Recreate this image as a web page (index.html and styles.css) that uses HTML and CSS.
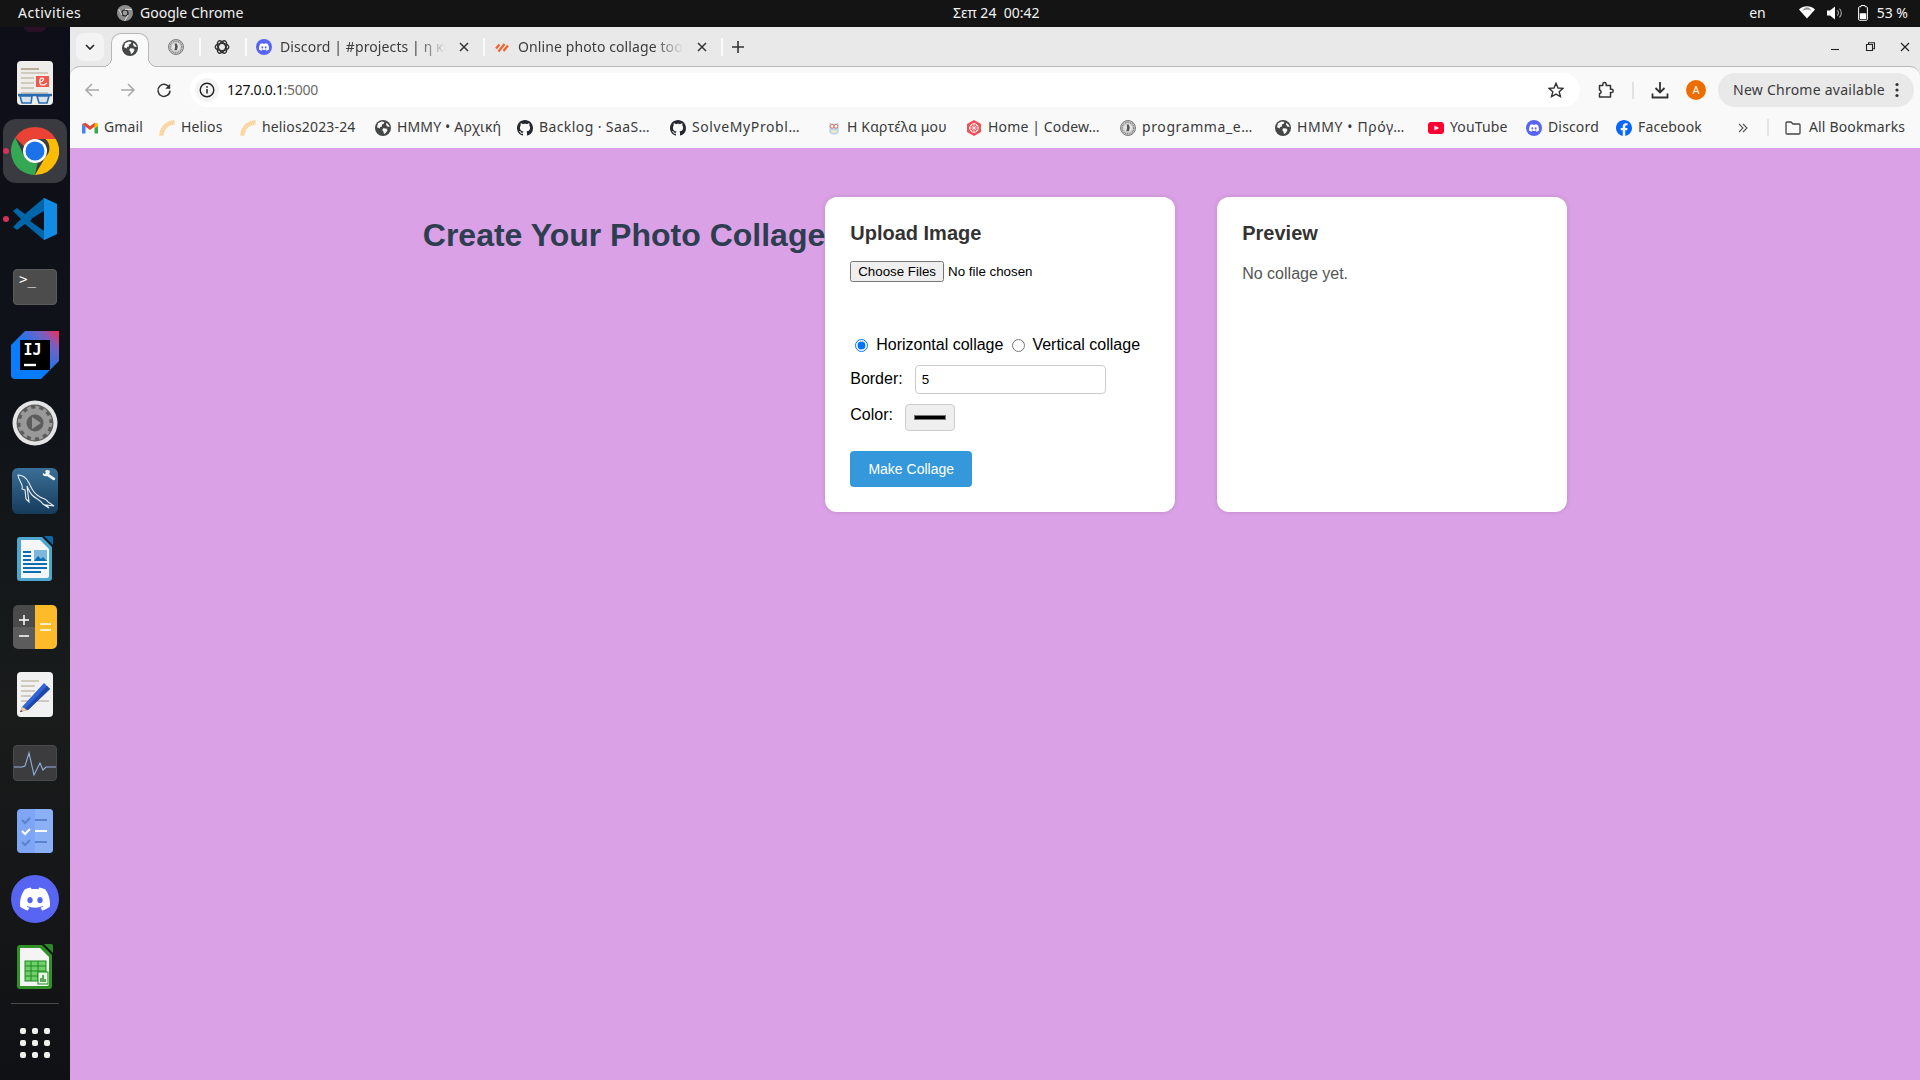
FILE: index.html
```html
<!DOCTYPE html>
<html lang="en">
<head>
<meta charset="utf-8">
<title>Online photo collage tool</title>
<link rel="stylesheet" href="styles.css">
</head>
<body>
<svg class="defs" width="0" height="0" aria-hidden="true">
  <symbol id="i-globe" viewBox="0 0 16 16">
    <circle cx="8" cy="8" r="8" fill="#444746"/>
    <path d="M3 3.2 6.6 1.400 9.400 2 8.600 4 6.800 4.600 7 6.400 5 7 4.800 8.400 2 7.200Z M8.200 8.200 11.400 8.400 12.600 10 10.800 13 9 14 8.400 11.400 7.200 10Z M11.400 2.800 14 5.200 14.600 7 12.200 6.400 11 4.600Z" fill="#f9f9f9"/>
  </symbol>
  <symbol id="i-github" viewBox="0 0 16 16">
    <path fill="#24292f" d="M8 0C3.58 0 0 3.58 0 8c0 3.54 2.29 6.53 5.47 7.59.4.07.55-.17.55-.38 0-.19-.01-.82-.01-1.49-2.01.37-2.53-.49-2.69-.94-.09-.23-.48-.94-.82-1.13-.28-.15-.68-.52-.01-.53.63-.01 1.08.58 1.23.82.72 1.21 1.87.87 2.33.66.07-.52.28-.87.51-1.07-1.78-.2-3.64-.89-3.64-3.95 0-.87.31-1.59.82-2.15-.08-.2-.36-1.02.08-2.12 0 0 .67-.21 2.2.82.64-.18 1.32-.27 2-.27.68 0 1.36.09 2 .27 1.53-1.04 2.2-.82 2.2-.82.44 1.1.16 1.92.08 2.12.51.56.82 1.27.82 2.15 0 3.07-1.87 3.75-3.65 3.95.29.25.54.73.54 1.48 0 1.07-.01 1.93-.01 2.2 0 .21.15.46.55.38A8.013 8.013 0 0016 8c0-4.42-3.58-8-8-8z"/>
  </symbol>
  <symbol id="i-discord-mark" viewBox="0 0 24 24">
    <path fill="#fff" d="M20.317 4.3698a19.7913 19.7913 0 00-4.8851-1.5152.0741.0741 0 00-.0785.0371c-.211.3753-.4447.8648-.6083 1.2495-1.8447-.2762-3.68-.2762-5.4868 0-.1636-.3933-.4058-.8742-.6177-1.2495a.077.077 0 00-.0785-.037 19.7363 19.7363 0 00-4.8852 1.515.0699.0699 0 00-.0321.0277C.5334 9.0458-.319 13.5799.0992 18.0578a.0824.0824 0 00.0312.0561c2.0528 1.5076 4.0413 2.4228 5.9929 3.0294a.0777.0777 0 00.0842-.0276c.4616-.6304.8731-1.2952 1.226-1.9942a.076.076 0 00-.0416-.1057c-.6528-.2476-1.2743-.5495-1.8722-.8923a.077.077 0 01-.0076-.1277c.1258-.0943.2517-.1923.3718-.2914a.0743.0743 0 01.0776-.0105c3.9278 1.7933 8.18 1.7933 12.0614 0a.0739.0739 0 01.0785.0095c.1202.099.246.1981.3728.2924a.077.077 0 01-.0066.1276 12.2986 12.2986 0 01-1.873.8914.0766.0766 0 00-.0407.1067c.3604.698.7719 1.3628 1.225 1.9932a.076.076 0 00.0842.0286c1.961-.6067 3.9495-1.5219 6.0023-3.0294a.077.077 0 00.0313-.0552c.5004-5.177-.8382-9.6739-3.5485-13.6604a.061.061 0 00-.0312-.0286zM8.02 15.3312c-1.1825 0-2.1569-1.0857-2.1569-2.419 0-1.3332.9555-2.4189 2.157-2.4189 1.2108 0 2.1757 1.0952 2.1568 2.419 0 1.3332-.9555 2.4189-2.1569 2.4189zm7.9748 0c-1.1825 0-2.1569-1.0857-2.1569-2.419 0-1.3332.9554-2.4189 2.1569-2.4189 1.2108 0 2.1757 1.0952 2.1568 2.419 0 1.3332-.946 2.4189-2.1568 2.4189Z"/>
  </symbol>
  <symbol id="i-discord" viewBox="0 0 16 16">
    <circle cx="8" cy="8" r="8" fill="#5865f2"/>
    <use href="#i-discord-mark" x="3" y="3" width="10" height="10"/>
  </symbol>
  <symbol id="i-helios" viewBox="0 0 16 16">
    <path d="M2.500 15.500A13 13 0 0 1 15.500 2.500" fill="none" stroke="#f9cf8f" stroke-width="4.500" stroke-dasharray="1.500 .4"/>
  </symbol>
  <symbol id="i-seal" viewBox="0 0 16 16">
    <circle cx="8" cy="8" r="7.500" fill="#cfcfcf" stroke="#6f6f6f" stroke-width=".9"/>
    <circle cx="8" cy="8" r="5.800" fill="none" stroke="#777" stroke-width="1.200" stroke-dasharray="1 .8"/>
    <circle cx="8" cy="8" r="3.900" fill="#e6e6e6"/>
    <path d="M6.600 4.600h2.200l1 2.800-.8 3.800H6.300l.8-3.400Z" fill="#555"/>
  </symbol>
  <symbol id="i-x" viewBox="0 0 12 12">
    <path d="M2 2l8 8M10 2l-8 8" stroke="#333" stroke-width="1.500" fill="none"/>
  </symbol>
</svg>

<div class="screen">
  <header class="topbar">
    <span class="tb-activities">Activities</span>
    <span class="tb-app">
      <svg class="tb-app-icon" width="16" height="16" viewBox="0 0 16 16"><circle cx="8" cy="8" r="8" fill="#8d8d8d"/><circle cx="8" cy="8" r="3.600" fill="#222"/><circle cx="8" cy="8" r="2.400" fill="#9a9a9a"/><path d="M8 4.400h7M5 10l-3.400-6M11 10l-3.400 6" stroke="#dcdcdc" stroke-width="1"/></svg>
      Google Chrome
    </span>
    <span class="tb-clock">Σεπ 24&nbsp;&nbsp;00:42</span>
    <span class="tb-status">
      <span class="tb-lang">en</span>
      <svg class="tb-wifi" width="16" height="13" viewBox="0 0 16 13"><path d="M0 3.400C4.400-.8 11.600-.8 16 3.400L8 12.600Z" fill="#fff"/><path d="M3.200 5.200C6-.2 10 0 12.800 5.200 10.400 3.400 5.600 3.400 3.200 5.200Z" fill="#141414" opacity=".45"/></svg>
      <svg class="tb-vol" width="16" height="14" viewBox="0 0 16 14"><path d="M0 4.600h3L8 .6v12.800L3 9.400H0Z" fill="#fff"/><path d="M10.200 4.400a3.400 3.400 0 0 1 0 5.200M12.400 2.600a6 6 0 0 1 0 8.800" fill="none" stroke="#aaa" stroke-width="1.100"/></svg>
      <svg class="tb-batt" width="10" height="16" viewBox="0 0 10 16"><path d="M3 .5h4v1.200h1.400c.6 0 1 .4 1 1v11.600c0 .6-.4 1-1 1H1.600c-.6 0-1-.4-1-1V2.700c0-.6.4-1 1-1H3Z" fill="none" stroke="#fff" stroke-width="1"/><rect x="1.800" y="8.200" width="6.400" height="5.800" rx=".6" fill="#fff"/></svg>
      <span class="tb-pct">53 %</span>
    </span>
  </header>

  <div class="desktop">
    <nav class="dock">
      <span class="dock-peek"></span>
      <div class="dock-slot">
        <svg width="36" height="46" viewBox="0 0 36 46"><rect width="36" height="44" y="1" rx="4" fill="#efedea"/><rect x="4" y="8" width="18" height="2" fill="#b9ae9a"/><path d="M4 13h27M4 18h13M4 23h13M4 28h13M4 33h27" stroke="#cfcabd" stroke-width="2"/><rect x="19" y="16" width="13" height="11" fill="#f0574a"/><path d="M23 22c3 0 5-4 2-4s-3 7 0 7 3-1 5-2" stroke="#fff" stroke-width="1.200" fill="none"/><path d="M1 35h34" stroke="#2a6cb3" stroke-width="2.500"/><path d="M3 36h12l-1 7H5ZM20 36h12l-2 7h-8Z" fill="#d7e4ee" stroke="#2a6cb3" stroke-width="1.600"/></svg>
      </div>
      <div class="dock-slot dock-active">
        <span class="dock-dot"></span>
        <svg width="48" height="48" viewBox="0 0 48 48">
          <path d="M24 0a24 24 0 0 1 20.800 12H24a12 12 0 0 0-11 7.200L4.200 10.400A24 24 0 0 1 24 0Z" fill="#ea4335"/>
          <path d="M44.800 12A24 24 0 0 1 24 48l10.400-18A12 12 0 0 0 34.400 12Z" fill="#fbbc04"/>
          <path d="M24 48A24 24 0 0 1 4.200 10.400L13.600 30a12 12 0 0 0 13 5.700Z" fill="#34a853"/>
          <circle cx="24" cy="24" r="12" fill="#fff"/><circle cx="24" cy="24" r="9.500" fill="#1a73e8"/>
        </svg>
      </div>
      <div class="dock-slot">
        <span class="dock-dot"></span>
        <svg width="44" height="44" viewBox="0 0 44 44">
          <path d="M31 1 44 7v30l-13 6Z" fill="#1f9cf0"/>
          <path d="M31 1v13L17 24 31 34v9L12 27 4 33 0 30l8-8L0 14l4-3 8 6Z" fill="#0065a9"/>
          <path d="M31 14v16L18 22Z" fill="#0f0f17"/>
          <path d="M31 1 44 7v30l-13 6Z" fill="#0078d4" opacity=".45"/>
        </svg>
      </div>
      <div class="dock-slot">
        <div class="dk-term"><span class="dk-term-p">&gt;_</span></div>
      </div>
      <div class="dock-slot">
        <svg width="48" height="48" viewBox="0 0 48 48">
          <defs><linearGradient id="ij" x1="0" y1="1" x2="1" y2="0"><stop offset=".45" stop-color="#087cfa"/><stop offset=".8" stop-color="#7a5fc0"/><stop offset="1" stop-color="#fe2857"/></linearGradient></defs>
          <path d="M14 0h34v30L30 48H4a4 4 0 0 1-4-4V14Z" fill="url(#ij)"/>
          <rect x="9" y="9" width="30" height="30" fill="#000"/>
          <path d="M13 34h12" stroke="#fff" stroke-width="2.400"/>
          <text class="dk-ij" x="12.500" y="24">IJ</text>
        </svg>
      </div>
      <div class="dock-slot">
        <svg width="46" height="46" viewBox="0 0 46 46">
          <circle cx="23" cy="23" r="22.500" fill="#e4e4e4"/><circle cx="23" cy="23" r="18.500" fill="#5c5c5c"/>
          <circle cx="23" cy="23" r="11.500" fill="none" stroke="#999" stroke-width="6"/>
          <circle cx="23" cy="23" r="15.500" fill="none" stroke="#999" stroke-width="3.500" stroke-dasharray="4 4.100"/>
          <path d="M20 17v12l9-6Z" fill="#999"/>
        </svg>
      </div>
      <div class="dock-slot">
        <svg width="46" height="46" viewBox="0 0 46 46">
          <defs><linearGradient id="wb" x1="0" y1="0" x2="0" y2="1"><stop offset="0" stop-color="#3b6f97"/><stop offset="1" stop-color="#163b5c"/></linearGradient></defs>
          <rect width="46" height="46" rx="6" fill="url(#wb)"/>
          <path d="M6 7c5 0 8 2 11 8s5 11 11 14 7 2 8 5l6 4-8-1 3 3-6-4c-2-4-7-5-11-9-3-3-4-7-5-9l2 16-3-3-1-9-3-1c2-4-4-9-4-14Z" fill="none" stroke="#e8eef3" stroke-width="1.100"/>
          <path d="M33 3c2-2 5-1 5 1l-1 2 6 4c1 1-1 3-2 2l-6-4c-3 1-5-1-4-3l2 1 1-1Z" fill="#eef3f6"/>
        </svg>
      </div>
      <div class="dock-slot">
        <svg width="36" height="46" viewBox="0 0 36 46">
          <path d="M27 0h7a2 2 0 0 1 2 2v7Z" fill="#0a6aa6"/>
          <path d="M3 1h22l10 10v31a3 3 0 0 1-3 3H3a3 3 0 0 1-3-3V4a3 3 0 0 1 3-3Z" fill="#4fa6cf"/>
          <path d="M4 4h19l9 9v27a2 2 0 0 1-2 2H4Z" fill="#f6f6f6"/>
          <path d="M6 16h8M6 20h8M6 24h8M6 28h24M6 32h24M6 36h18" stroke="#0a6eb4" stroke-width="2"/>
          <rect x="17" y="14" width="13" height="11" fill="#7db7dc"/><path d="M17 25l4-5 3 3 2-2 4 4Z" fill="#0a6eb4"/>
        </svg>
      </div>
      <div class="dock-slot">
        <svg width="44" height="44" viewBox="0 0 44 44">
          <path d="M5 0h17v22H0V5a5 5 0 0 1 5-5Z" fill="#4a4a4a"/>
          <path d="M0 22h22v22H5a5 5 0 0 1-5-5Z" fill="#5c5c5c"/>
          <path d="M22 0h17a5 5 0 0 1 5 5v34a5 5 0 0 1-5 5H22Z" fill="#fdbb2a"/>
          <path d="M6 15h10M11 10v10M6 31h10M27 19h11M27 25h11" stroke="#fff" stroke-width="1.500"/>
        </svg>
      </div>
      <div class="dock-slot">
        <svg width="36" height="46" viewBox="0 0 36 46">
          <rect width="36" height="45" rx="4" fill="#f1f1f1"/>
          <path d="M4 9h18M4 14h14M4 19h14M4 24h10M4 29h10M20 29h12" stroke="#cfcabd" stroke-width="2"/>
          <path d="M5 35 27 11l6 6-22 21-8 2Z" fill="#2f63d8"/>
          <path d="M5 35 9 37l2 1-8 2Z" fill="#f3c99c"/><path d="M4.500 38 3 40l2.400-.6Z" fill="#333"/>
          <path d="M8 37 30 14l3 3-22 21Z" fill="#1f47a8"/>
        </svg>
      </div>
      <div class="dock-slot">
        <div class="dk-term dk-monitor">
          <svg width="44" height="36" viewBox="0 0 44 36"><path d="M0 22h9l3-1 4-13 5 22 6-12 3 7 3-3h11" fill="none" stroke="#8fb1e0" stroke-width="1.100"/></svg>
        </div>
      </div>
      <div class="dock-slot">
        <svg width="36" height="44" viewBox="0 0 36 44">
          <rect width="36" height="44" rx="4" fill="#7ea6f4"/><path d="M18 0h14a4 4 0 0 1 4 4v36a4 4 0 0 1-4 4H18Z" fill="#8cb0f6"/>
          <path d="M5 11l3 3 5-5M5 33l3 3 5-5" fill="none" stroke="#5a82cf" stroke-width="2"/><path d="M18 11h12M18 33h12" stroke="#5a82cf" stroke-width="2"/>
          <path d="M5 22l3 3 5-5" fill="none" stroke="#fff" stroke-width="2"/><path d="M18 22h12" stroke="#fff" stroke-width="2"/>
        </svg>
      </div>
      <div class="dock-slot">
        <svg width="48" height="48" viewBox="0 0 48 48"><circle cx="24" cy="24" r="24" fill="#5865f2"/><use href="#i-discord-mark" x="9" y="9" width="30" height="30"/></svg>
      </div>
      <div class="dock-slot">
        <svg width="36" height="46" viewBox="0 0 36 46">
          <path d="M27 0h7a2 2 0 0 1 2 2v7Z" fill="#2d8a2a"/>
          <path d="M3 1h22l10 10v31a3 3 0 0 1-3 3H3a3 3 0 0 1-3-3V4a3 3 0 0 1 3-3Z" fill="#2f9126"/>
          <path d="M3 4h20l9 9v27a2 2 0 0 1-2 2H3Z" fill="#f4f4f4"/>
          <rect x="8" y="17" width="21" height="20" fill="#6fcf6a" stroke="#1f8a1f" stroke-width="1"/>
          <path d="M8 22h21M8 27h21M8 32h21M14 17v20M21 17v20" stroke="#1f8a1f" stroke-width="1"/>
          <rect x="21" y="28" width="10" height="12" fill="#eaf6e8" stroke="#1f8a1f" stroke-width="1"/><path d="M24 38v-4M26 38v-7M28 38v-3" stroke="#1f8a1f" stroke-width="1.400"/>
        </svg>
      </div>
      <hr class="dock-sep">
      <div class="dock-grid"><i></i><i></i><i></i><i></i><i></i><i></i><i></i><i></i><i></i></div>
    </nav>

    <div class="browser">
      <div class="tabstrip">
        <button class="tab-search"><svg width="10" height="6" viewBox="0 0 10 6"><path d="M1 1l4 4 4-4" fill="none" stroke="#222" stroke-width="1.600"/></svg></button>
        <div class="tab-active"><svg width="16" height="16"><use href="#i-globe"/></svg></div>
        <div class="tab-pin tab-pin-a"><svg width="16" height="16"><use href="#i-seal"/></svg></div>
        <span class="tab-sep"></span>
        <div class="tab-pin tab-pin-b">
          <svg width="16" height="16" viewBox="0 0 16 16"><g fill="none" stroke="#333" stroke-width="1.400"><ellipse cx="8" cy="8" rx="6.800" ry="3.600"/><ellipse cx="8" cy="8" rx="6.800" ry="3.600" transform="rotate(60 8 8)"/><ellipse cx="8" cy="8" rx="6.800" ry="3.600" transform="rotate(120 8 8)"/></g></svg>
        </div>
        <span class="tab-sep"></span>
        <div class="tab">
          <svg width="16" height="16"><use href="#i-discord"/></svg>
          <span class="tab-title">Discord | #projects | η κε</span>
          <svg class="tab-x" width="12" height="12"><use href="#i-x"/></svg>
        </div>
        <span class="tab-sep"></span>
        <div class="tab">
          <svg width="16" height="16" viewBox="0 0 16 16"><path d="M2 9.500 5.500 5.500M4.500 12.500 10.500 5M9.500 12 14 6.500" stroke="#f0652f" stroke-width="2.200" fill="none"/></svg>
          <span class="tab-title">Online photo collage too</span>
          <svg class="tab-x" width="12" height="12"><use href="#i-x"/></svg>
        </div>
        <span class="tab-sep"></span>
        <svg class="tab-new" width="12" height="12" viewBox="0 0 12 12"><path d="M6 0v12M0 6h12" stroke="#333" stroke-width="1.600"/></svg>
        <div class="win-ctrl">
          <span class="win-btn"><svg width="10" height="10" viewBox="0 0 10 10"><path d="M1 7.500h8" stroke="#222" stroke-width="1.100"/></svg></span>
          <span class="win-btn"><svg width="10" height="10" viewBox="0 0 10 10"><path d="M1.500 2.500h6v6h-6ZM3.500 2.500V.8h6v6H7.500" fill="none" stroke="#222" stroke-width="1.100"/></svg></span>
          <span class="win-btn"><svg width="10" height="10" viewBox="0 0 10 10"><path d="M1 1l8 8M9 1l-8 8" stroke="#222" stroke-width="1.200"/></svg></span>
        </div>
      </div>

      <div class="toolbar">
        <span class="nav-btn"><svg width="16" height="16" viewBox="0 0 16 16"><path d="M15 8H2M8 2 2 8l6 6" fill="none" stroke="#a8a8a8" stroke-width="1.500"/></svg></span>
        <span class="nav-btn"><svg width="16" height="16" viewBox="0 0 16 16"><path d="M1 8h13M8 2l6 6-6 6" fill="none" stroke="#a8a8a8" stroke-width="1.500"/></svg></span>
        <span class="nav-btn"><svg width="16" height="16" viewBox="0 0 16 16"><path d="M13.600 6.200A6 6 0 1 0 14 8.600" fill="none" stroke="#333" stroke-width="1.500"/><path d="M14.200 1.800v5h-5Z" fill="#333"/></svg></span>
        <div class="omnibox">
          <span class="omni-info"><svg width="16" height="16" viewBox="0 0 16 16"><circle cx="8" cy="8" r="6.800" fill="none" stroke="#222" stroke-width="1.400"/><path d="M8 7v4.500" stroke="#222" stroke-width="1.500"/><circle cx="8" cy="4.900" r=".9" fill="#222"/></svg></span>
          <span class="omni-url">127.0.0.1<span class="omni-port">:5000</span></span>
          <svg class="omni-star" width="16" height="16" viewBox="0 0 16 16"><path d="M8 1.300l2 4.700 5 .4-3.800 3.300 1.200 4.900L8 12.100l-4.400 2.500 1.200-4.900L1 6.400l5-.4Z" fill="none" stroke="#333" stroke-width="1.400"/></svg>
        </div>
        <span class="tool-btn tool-ext"><svg width="18" height="18" viewBox="0 0 18 18"><path d="M2.500 4.500H5.800V3.200a1.700 1.700 0 0 1 3.400 0v1.300h4.300v3.700h1a1.700 1.700 0 0 1 0 3.400h-1v4.400H2.500v-3.400a1.600 1.600 0 0 0 1.500-1.800 1.600 1.600 0 0 0-1.500-1.700Z" fill="none" stroke="#333" stroke-width="1.500" stroke-linejoin="round"/></svg></span>
        <span class="tool-sep"></span>
        <span class="tool-btn tool-dl"><svg width="18" height="18" viewBox="0 0 18 18"><path d="M9 1v10M4.500 7 9 11.500 13.500 7M1.500 12.500v4h15v-4" fill="none" stroke="#333" stroke-width="1.800"/></svg></span>
        <span class="tool-btn"><span class="avatar">A</span></span>
        <div class="update-pill"><span class="pill-text">New Chrome available</span><svg class="pill-dots" width="4" height="16" viewBox="0 0 4 16"><circle cx="2" cy="2.500" r="1.600" fill="#333"/><circle cx="2" cy="8" r="1.600" fill="#333"/><circle cx="2" cy="13.500" r="1.600" fill="#333"/></svg></div>
      </div>

      <div class="bookmarks">
        <div class="bm-list">
          <a class="bm"><svg width="16" height="16" viewBox="0 0 16 16"><path d="M0 4v9.500h3.500V6.500Z" fill="#4285f4"/><path d="M16 4v9.500h-3.500V6.500Z" fill="#34a853"/><path d="M12.500 2.800 16 4 8 10 0 4l3.500-1.200L8 6.200Z" fill="#ea4335"/><path d="M12.500 3 16 3.500V6l-3.500 2.500Z" fill="#fbbc04"/></svg><span>Gmail</span></a>
          <a class="bm"><svg width="16" height="16"><use href="#i-helios"/></svg><span>Helios</span></a>
          <a class="bm"><svg width="16" height="16"><use href="#i-helios"/></svg><span>helios2023-24</span></a>
          <a class="bm"><svg width="16" height="16"><use href="#i-globe"/></svg><span>HMMY • Αρχική</span></a>
          <a class="bm"><svg width="16" height="16"><use href="#i-github"/></svg><span class="bm-mid">Backlog · SaaS…</span></a>
          <a class="bm"><svg width="16" height="16"><use href="#i-github"/></svg><span class="bm-long">SolveMyProbl…</span></a>
          <a class="bm"><svg class="bm-owl" width="14" height="16" viewBox="0 0 16 16"><path d="M3 1l2 2h6l2-2 .5 10c0 3-2.500 4.500-5.500 4.500S2.500 14 2.500 11Z" fill="#b9d7ea"/><circle cx="5.800" cy="6" r="2.200" fill="#fff" stroke="#e0584a"/><circle cx="10.200" cy="6" r="2.200" fill="#fff" stroke="#e0584a"/><path d="M5 10.500h6v3H5Z" fill="#f4e6c8"/></svg><span>Η Καρτέλα μου</span></a>
          <a class="bm"><svg width="16" height="16" viewBox="0 0 16 16"><path d="M8 0l7 4v8l-7 4-7-4V4Z" fill="#f05058"/><circle cx="8" cy="8" r="4.300" fill="none" stroke="#fff" stroke-width="1"/><path d="M8 3.700v8.600M3.700 8h8.600M5 5l6 6M11 5l-6 6" stroke="#fff" stroke-width=".7"/></svg><span>Home | Codew…</span></a>
          <a class="bm"><svg width="16" height="16"><use href="#i-seal"/></svg><span class="bm-long">programma_e…</span></a>
          <a class="bm"><svg width="16" height="16"><use href="#i-globe"/></svg><span class="bm-long">HMMY • Πρόγ…</span></a>
          <a class="bm"><svg width="16" height="16" viewBox="0 0 16 16"><rect y="2" width="16" height="12" rx="3" fill="#ff0033"/><path d="M6.400 5.400v5.200L11 8Z" fill="#fff"/></svg><span>YouTube</span></a>
          <a class="bm"><svg width="16" height="16"><use href="#i-discord"/></svg><span>Discord</span></a>
          <a class="bm"><svg width="16" height="16" viewBox="0 0 24 24"><path fill="#0866ff" d="M24 12.073c0-6.627-5.373-12-12-12s-12 5.373-12 12c0 5.990 4.388 10.954 10.125 11.854v-8.385H7.078v-3.470h3.047V9.430c0-3.007 1.792-4.669 4.533-4.669 1.312 0 2.686.235 2.686.235v2.953H15.830c-1.491 0-1.956.925-1.956 1.874v2.250h3.328l-.532 3.470h-2.796v8.385C19.612 23.027 24 18.062 24 12.073z"/></svg><span>Facebook</span></a>
        </div>
        <svg class="bm-more" width="10" height="10" viewBox="0 0 10 10"><path d="M1 1l4 4-4 4M5 1l4 4-4 4" fill="none" stroke="#555" stroke-width="1.100"/></svg>
        <span class="bm-sep"></span>
        <a class="bm bm-all"><svg width="16" height="14" viewBox="0 0 16 14"><path d="M1 2a1 1 0 0 1 1-1h4l2 2h6a1 1 0 0 1 1 1v8a1 1 0 0 1-1 1H2a1 1 0 0 1-1-1Z" fill="none" stroke="#444" stroke-width="1.300"/></svg><span>All Bookmarks</span></a>
      </div>

      <main class="page">
        <h1 class="page-title">Create Your Photo Collage</h1>
        <div class="cards">
          <section class="card">
            <h2 class="card-title">Upload Image</h2>
            <form class="form">
              <input class="file" type="file" multiple>
              <div class="radios">
                <input id="r-h" type="radio" name="orient" checked><label for="r-h">Horizontal collage</label>
                <input id="r-v" class="radio-v" type="radio" name="orient"><label for="r-v">Vertical collage</label>
              </div>
              <div class="row-border">
                <label for="f-border">Border:</label>
                <input id="f-border" class="num" type="text" value="5">
              </div>
              <div class="row-color">
                <label for="f-color">Color:</label>
                <input id="f-color" class="color" type="color" value="#000000">
              </div>
              <button class="make" type="button">Make Collage</button>
            </form>
          </section>
          <section class="card">
            <h2 class="card-title">Preview</h2>
            <p class="empty">No collage yet.</p>
          </section>
        </div>
      </main>
    </div>
  </div>
</div>
</body>
</html>
```
FILE: styles.css
```css
* { box-sizing: border-box; }
html, body { margin: 0; height: 100%; overflow: hidden; }
body { font-family: "Noto Sans", sans-serif; font-size: 14px; color: #333; }
.defs { position: absolute; }
.screen { display: flex; flex-direction: column; height: 1080px; }

/* top bar */
.topbar { height: 27px; flex: none; padding-bottom: 2px; background: #141414; color: #f2f2f2; display: flex; align-items: center; position: relative; font-size: 14px; }
.tb-activities { margin-left: 18px; width: 98px; letter-spacing: .5px; }
.tb-app { display: flex; align-items: center; gap: 7px; }
.tb-app-icon { margin-left: 1px; }
.tb-clock { position: absolute; left: 953px; }
.tb-status { margin-left: auto; display: flex; align-items: center; }
.tb-lang { margin-right: 33px; }
.tb-wifi { margin-right: 12px; }
.tb-vol { margin-right: 15px; }
.tb-batt { margin-right: 9px; }
.tb-pct { margin-right: 12px; }

/* dock */
.desktop { flex: 1; display: flex; min-height: 0; }
.dock { width: 70px; flex: none; padding-top: 22px; display: flex; flex-direction: column; align-items: center; position: relative; background: linear-gradient(180deg, #0e0e18 0%, #0f1318 35%, #191c1b 65%, #101114 100%); }
.dock-peek { position: absolute; top: 0; left: 24px; width: 22px; height: 5px; border-radius: 0 0 11px 11px; background: #2a1026; }
.dock-slot { width: 64px; height: 68px; flex: none; display: flex; align-items: center; justify-content: center; position: relative; }
.dock-active::before { content: ""; position: absolute; inset: 2px 0; background: #3a3b40; border-radius: 13px; }
.dock-active svg { position: relative; }
.dock-dot { position: absolute; left: 0; top: 50%; width: 6px; height: 6px; margin-top: -3px; border-radius: 50%; background: #d8305c; z-index: 1; }
.dk-term { width: 44px; height: 36px; border-radius: 4px; background: #4c4c4c; border: 1px solid #5c5c5c; position: relative; }
.dk-term-p { position: absolute; left: 5px; top: 0; color: #fff; font: 14px/18px "DejaVu Sans Mono", monospace; }
.dk-monitor { background: #3c3c3e; overflow: hidden; border-color: #4a4a4c; }
.dk-monitor svg { display: block; margin: -1px; }
.dk-ij { font: bold 15px "DejaVu Sans Mono", monospace; fill: #fff; }
.dock-sep { width: 48px; height: 1px; border: 0; margin: 2px 0 0; background: #4a4a4a; flex: none; }
.dock-grid { margin-top: 24px; display: grid; grid-template-columns: repeat(3, 6px); grid-auto-rows: 6px; gap: 6px; }
.dock-grid i { background: #f0f0ec; border-radius: 2px; }

/* browser */
.browser { flex: 1; min-width: 0; display: flex; flex-direction: column; background: #e9e9e9; }
.tabstrip { height: 39px; flex: none; display: flex; align-items: center; padding-left: 6px; font-size: 14px; color: #3c3c3c; position: relative; z-index: 1; }
.tab-search { width: 28px; height: 28px; margin-top: 1px; border: 0; padding: 0; border-radius: 8px; background: #f3f3f3; display: flex; align-items: center; justify-content: center; }
.tab-active { margin: 0 0 -1px 7px; width: 38px; height: 34px; align-self: flex-end; background: #f9f9f9; border: 1px solid #b8b8b8; border-bottom: 0; border-radius: 10px 10px 0 0; display: flex; align-items: center; justify-content: center; position: relative; }
.tab-active::before, .tab-active::after { content: ""; position: absolute; bottom: 0; width: 10px; height: 10px; }
.tab-active::before { left: -10px; background: radial-gradient(circle at 0 0, transparent 9.500px, #b8b8b8 9.500px, #b8b8b8 10.500px, #f9f9f9 10.500px); }
.tab-active::after { right: -10px; background: radial-gradient(circle at 100% 0, transparent 9.500px, #b8b8b8 9.500px, #b8b8b8 10.500px, #f9f9f9 10.500px); }
.tab-active svg { margin-top: -6px; }
.tab-pin { width: 44px; display: flex; justify-content: center; }
.tab-pin-a { width: 50px; padding-left: 4px; }
.tab-pin-b { padding-right: 2px; }
.tab-sep { width: 2px; height: 18px; background: #fafafa; flex: none; }
.tab { width: 236px; padding-left: 9px; display: flex; align-items: center; gap: 8px; flex: none; }
.tab-title { width: 166px; white-space: nowrap; letter-spacing: .1px; -webkit-mask-image: linear-gradient(90deg, #000 82%, transparent 100%); mask-image: linear-gradient(90deg, #000 82%, transparent 100%); }
.tab-x { margin-left: 4px; }
.tab-new { margin-left: 9px; }
.win-ctrl { margin-left: auto; display: flex; gap: 5px; }
.win-btn { width: 30px; height: 20px; display: flex; align-items: center; justify-content: center; }

.toolbar { height: 41px; flex: none; background: #f9f9f9; border-top: 1px solid #b8b8b8; border-radius: 10px 10px 0 0; padding: 6px 6px 0 4px; display: flex; align-items: stretch; }
.nav-btn { width: 36px; display: flex; align-items: center; justify-content: center; }
.omnibox { flex: 1; margin-left: 8px; background: #fff; border-radius: 17px; display: flex; align-items: center; padding-left: 5px; min-width: 0; font-size: 14px; color: #111; }
.omni-info { width: 24px; height: 24px; border-radius: 50%; background: #f4f4f4; display: flex; align-items: center; justify-content: center; }
.omni-url { margin: -2px 0 0 8px; letter-spacing: -.3px; }
.omni-port { color: #6a6a6a; }
.omni-star { margin-left: auto; margin-right: 16px; }
.tool-btn { width: 36px; display: flex; align-items: center; justify-content: center; }
.tool-ext { margin-left: 8px; }
.tool-sep { width: 2px; height: 17px; align-self: center; background: #e2e2e2; margin-left: 8px; }
.tool-dl { margin-left: 8px; }
.avatar { width: 20px; height: 20px; border-radius: 50%; background: #ee6c00; color: #fff; font-size: 11px; line-height: 20px; text-align: center; }
.update-pill { width: 196px; margin-left: 4px; border-radius: 17px; background: #e9e9e9; display: flex; align-items: center; padding-left: 15px; white-space: nowrap; color: #3a3a3a; font-size: 14px; letter-spacing: .25px; }
.pill-text { margin-top: -2px; }
.pill-dots { margin-left: auto; margin-right: 15px; }

.bookmarks { height: 41px; flex: none; background: #f9f9f9; display: flex; align-items: center; padding-left: 12px; font-size: 14px; color: #3a3a3a; }
.bm-list { display: grid; grid-template-columns: 77px 81px 135px 142px 153px 157px 139px 154px 155px 153px 98px 90px 115px; }
.bm { display: flex; align-items: center; gap: 6px; white-space: nowrap; }
.bm span { margin-top: -2px; letter-spacing: .15px; }
.bm .bm-mid { letter-spacing: .4px; }
.bm .bm-long { letter-spacing: .6px; }
.bm svg { flex: none; }
.bm-more { margin-left: 7px; }
.bm-sep { width: 2px; height: 17px; background: #e4e4e4; margin-left: 19px; }
.bm-all { margin-left: 16px; gap: 8px; }

/* page */
.page { flex: 1; min-height: 0; background: #dba1e6; display: flex; justify-content: center; align-items: flex-start; padding-top: 49px; font-family: "Liberation Sans", Arial, sans-serif; font-size: 16px; color: #000; }
.page-title { margin: 20px 0 0; font-size: 32px; line-height: 37px; font-weight: 700; color: #2c3e50; white-space: nowrap; }
.cards { display: flex; gap: 42px; }
.card { width: 350px; height: 315px; padding: 25px; background: #fff; border-radius: 12px; box-shadow: 0 0 4px rgba(0, 0, 0, .15); }
.card-title { margin: 0; font-size: 20px; line-height: 23px; font-weight: 700; color: #333; }
.file { display: block; margin-top: 16px; font-size: 13.333px; }
.radios { margin-top: 53px; display: flex; align-items: center; height: 20px; line-height: 22px; }
.radios input { margin: 0 8px 0 5px; }
.radios .radio-v { margin-right: 7px; }
.radios label { margin-right: 4px; }
.row-border { margin-top: 10px; display: flex; align-items: flex-start; gap: 12px; }
.row-border label { line-height: 28px; }
.num { width: 191px; height: 29px; border: 1px solid #ccc; border-radius: 4px; padding: 6px; font: 13.333px "Liberation Sans", Arial, sans-serif; color: #000; }
.row-color { margin-top: 10px; display: flex; align-items: flex-start; gap: 12px; }
.row-color label { line-height: 22px; }
.color { width: 50px; height: 27px; padding: 6px; margin: 0; background: #efefef; border: 1px solid #ccc; border-radius: 4px; }
.make { display: block; margin-top: 20px; width: 122px; height: 36px; padding: 0; border: 0; border-radius: 4px; background: #3498db; color: #fff; font: 14px "Liberation Sans", Arial, sans-serif; }
.empty { margin: 20px 0 0; color: #555; line-height: 18px; }
```
